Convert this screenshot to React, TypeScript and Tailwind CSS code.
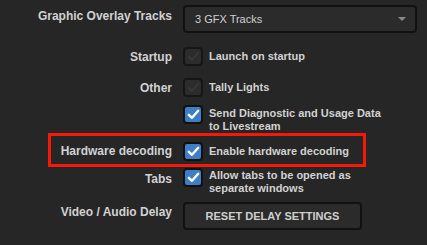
import React from "react";

const Check: React.FC<{ checked?: boolean }> = ({ checked }) => {
  return (
    <div
      className={
        checked
          ? "w-[20px] h-[19px] shrink-0 rounded-[4px] border-2 border-[#111] bg-[#3d7ec6] flex items-center justify-center"
          : "w-[20px] h-[19px] shrink-0 rounded-[4px] border-2 border-[#151515] bg-[#2c2c2c] flex items-center justify-center"
      }
    >
      <svg width="13" height="11" viewBox="0 0 13 11">
        <path
          d="M1.8 5.8 L5 8.8 L11.2 1.8"
          fill="none"
          stroke={checked ? "#ffffff" : "#3a3a3a"}
          strokeWidth={checked ? 2.4 : 1.6}
          strokeLinecap="round"
          strokeLinejoin="round"
        />
      </svg>
    </div>
  );
};

export default function App() {
  return (
    <div
      className="w-[427px] h-[245px] bg-[#262626] text-[#d2d2d2] overflow-hidden pt-[5px]"
      style={{ fontFamily: '"Liberation Sans", Arial, sans-serif' }}
    >
      {/* Graphic overlay tracks */}
      <div className="flex">
        <div className="w-[172px] text-right text-[12px] font-bold leading-[14px] pt-[4px]">
          Graphic Overlay Tracks
        </div>
        <div className="ml-[11px] w-[234px] h-[28px] rounded-[4px] border-2 border-[#111] bg-[#2b2b2b] flex items-center justify-between pl-[10px] pr-[9px]">
          <span className="text-[11px] text-[#d0d0d0]">3 GFX Tracks</span>
          <svg width="8" height="4" viewBox="0 0 8 4">
            <path d="M0 0 H8 L4 4 Z" fill="#8a8a8a" />
          </svg>
        </div>
      </div>

      {/* Startup */}
      <div className="flex items-center mt-[14px] h-[19px]">
        <div className="w-[172px] text-right text-[12px] font-bold">Startup</div>
        <div className="ml-[11px] flex items-center gap-[6px]">
          <Check />
          <span className="text-[11px] font-bold">Launch on startup</span>
        </div>
      </div>

      {/* Other */}
      <div className="flex items-center mt-[12px] h-[19px]">
        <div className="w-[172px] text-right text-[12px] font-bold">Other</div>
        <div className="ml-[11px] flex items-center gap-[6px]">
          <Check />
          <span className="text-[11px] font-bold">Tally Lights</span>
        </div>
      </div>

      <div className="flex mt-[8px] h-[28px]">
        <div className="w-[172px]" />
        <div className="ml-[11px] flex items-start gap-[6px]">
          <Check checked />
          <span className="text-[11px] font-bold leading-[13px] pt-[2px]">
            Send Diagnostic and Usage Data
            <br />
            to Livestream
          </span>
        </div>
      </div>

      {/* Hardware decoding, outlined in red */}
      <div className="ml-[48px] w-[318px] h-[34px] border-[3px] border-[#f5190a] flex items-center">
        <div className="w-[121px] text-right text-[12px] font-bold pt-[2px]">Hardware decoding</div>
        <div className="ml-[11px] flex items-center gap-[6px] pt-[2px]">
          <Check checked />
          <span className="text-[11px] font-bold">Enable hardware decoding</span>
        </div>
      </div>

      {/* Tabs */}
      <div className="flex mt-[1px]">
        <div className="w-[172px] text-right text-[12px] font-bold pt-[2px]">Tabs</div>
        <div className="ml-[11px] flex items-start gap-[6px]">
          <Check checked />
          <span className="text-[11px] font-bold leading-[13px] pt-[1px]">
            Allow tabs to be opened as
            <br />
            separate windows
          </span>
        </div>
      </div>

      {/* Delay */}
      <div className="flex mt-[7px]">
        <div className="w-[172px] text-right text-[12px] font-bold leading-[14px] pt-[3px]">
          Video / Audio Delay
        </div>
        <button className="ml-[11px] w-[179px] h-[28px] rounded-[4px] border-2 border-[#111] bg-[#2b2b2b] text-[11px] font-bold text-[#cfcfcf] flex items-center justify-center">
          RESET DELAY SETTINGS
        </button>
      </div>
    </div>
  );
}
